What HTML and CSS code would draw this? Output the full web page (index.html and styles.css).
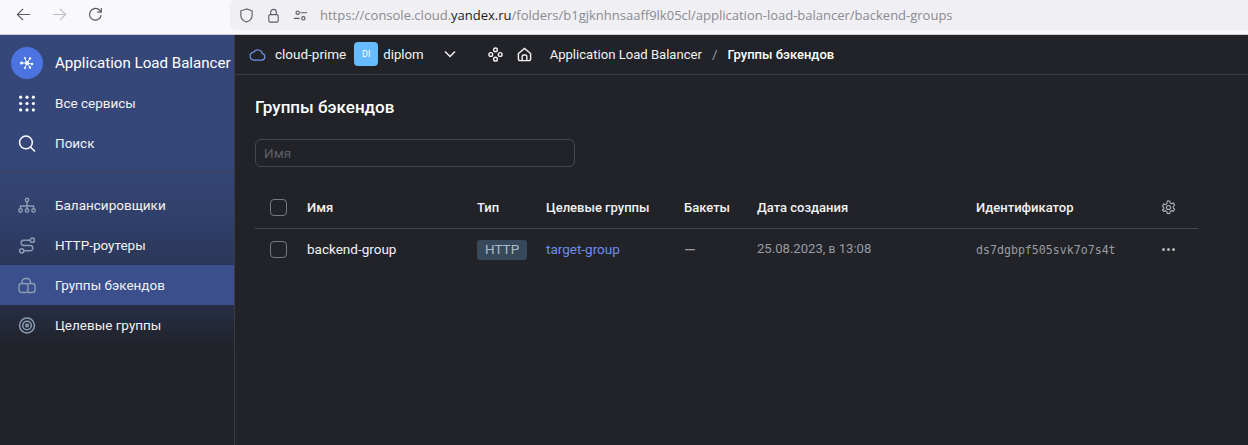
FILE: index.html
```html
<!DOCTYPE html>
<html lang="ru">
<head>
    <meta charset="UTF-8">
    <title>Группы бэкендов</title>
    <link rel="stylesheet" href="styles.css">
</head>
<body>
    <div class="browser-bar">
        <div class="nav-buttons">
            <svg class="nav-icon" viewBox="0 0 16 16"><path d="M15 8H1.500M7.500 2 1.500 8l6 6"/></svg>
            <svg class="nav-icon nav-off" viewBox="0 0 16 16"><path d="M1 8h13.500M8.500 2l6 6-6 6"/></svg>
            <svg class="nav-icon" viewBox="0 0 16 16"><path d="M14 8.600A6.200 6.200 0 1 1 11.800 3l2.200 2.200"/><path d="M14.200 1v4.400H9.800"/></svg>
        </div>
        <div class="url-pill">
            <svg class="url-icon" viewBox="0 0 16 16"><path d="M8 1 2 3v5c0 3.400 2.600 5.800 6 7 3.400-1.200 6-3.600 6-7V3z"/></svg>
            <svg class="url-icon" viewBox="0 0 16 16"><rect x="3" y="7" width="10" height="8" rx="1.500"/><path d="M5 7V4.500a3 3 0 0 1 6 0V7"/></svg>
            <svg class="url-icon" viewBox="0 0 16 16"><path d="M8 5h7M1 11h6"/><circle cx="5" cy="5" r="1.800"/><circle cx="11" cy="11" r="1.800"/></svg>
            <span class="url-text">https://console.cloud.<b>yandex.ru</b>/folders/b1gjknhnsaaff9lk05cl/application-load-balancer/backend-groups</span>
        </div>
    </div>

    <div class="app">
        <aside class="sidebar">
            <div class="brand">
                <span class="brand-logo">
                    <svg viewBox="0 0 16 16"><path d="M8 8 3 8M8 8l3-4.500M8 8l4.500 1M8 8l-2-4.500M8 8l-2 4.500M8 8l3 4.500"/><circle cx="8" cy="8" r="2" class="dot"/><circle cx="2.500" cy="8" r="1.500" class="dot"/><circle cx="11" cy="3.500" r="1.200" class="dot"/><circle cx="13" cy="9" r="1.200" class="dot"/><circle cx="6" cy="3" r="1" class="dot"/><circle cx="6" cy="13" r="1" class="dot"/><circle cx="11" cy="12.500" r="1.200" class="dot"/></svg>
                </span>
                <span class="brand-name">Application Load Balancer</span>
            </div>
            <a class="side-item white">
                <svg viewBox="0 0 16 16"><g class="dot"><circle cx="2" cy="2" r="1.500"/><circle cx="8" cy="2" r="1.500"/><circle cx="14" cy="2" r="1.500"/><circle cx="2" cy="8" r="1.500"/><circle cx="8" cy="8" r="1.500"/><circle cx="14" cy="8" r="1.500"/><circle cx="2" cy="14" r="1.500"/><circle cx="8" cy="14" r="1.500"/><circle cx="14" cy="14" r="1.500"/></g></svg>
                <span>Все сервисы</span>
            </a>
            <a class="side-item white">
                <svg viewBox="0 0 16 16"><circle cx="7" cy="7" r="6"/><path d="m11.500 11.500 4 4"/></svg>
                <span>Поиск</span>
            </a>
            <div class="side-divider"></div>
            <a class="side-item">
                <svg viewBox="0 0 18 16"><circle cx="9" cy="2.500" r="1.700"/><circle cx="2.500" cy="13" r="1.700"/><circle cx="9" cy="13" r="1.700"/><circle cx="15.500" cy="13" r="1.700"/><path d="M9 4.500v6.500M2.500 11V8.500h13V11"/></svg>
                <span>Балансировщики</span>
            </a>
            <a class="side-item">
                <svg viewBox="0 0 16 16"><circle cx="13" cy="3" r="2"/><circle cx="3" cy="13" r="2"/><path d="M11 3H5a2.500 2.500 0 0 0 0 5h6a2.500 2.500 0 0 1 0 5H5"/></svg>
                <span>HTTP-роутеры</span>
            </a>
            <a class="side-item active">
                <svg viewBox="0 0 18 16"><rect x="1" y="6" width="9" height="9" rx="2.500"/><path d="M4 6V4.500A3.500 3.500 0 0 1 7.500 1h1.500a3.500 3.500 0 0 1 3.500 3.500V6"/><path d="M10 6h4.500A2.500 2.500 0 0 1 17 8.500v4a2.500 2.500 0 0 1-2.500 2.500H10"/></svg>
                <span>Группы бэкендов</span>
            </a>
            <a class="side-item">
                <svg viewBox="0 0 16 16"><circle cx="8" cy="8" r="7"/><circle cx="8" cy="8" r="4"/><circle cx="8" cy="8" r="1.200"/></svg>
                <span>Целевые группы</span>
            </a>
        </aside>

        <main class="content">
            <header class="topbar">
                <svg class="cloud-icon" viewBox="0 0 18 14"><path d="M4.500 13h9a3.500 3.500 0 0 0 .7-6.900A5 5 0 0 0 5 4.500 4.300 4.300 0 0 0 4.500 13z"/></svg>
                <span class="crumb cloud-name">cloud-prime</span>
                <span class="folder-badge">DI</span>
                <span class="crumb folder-name">diplom</span>
                <svg class="chevron" viewBox="0 0 12 8"><path d="m1 1.500 5 5 5-5"/></svg>
                <svg class="top-icon" viewBox="0 0 16 16"><circle cx="8" cy="3" r="2"/><circle cx="3" cy="8" r="2"/><circle cx="13" cy="8" r="2"/><circle cx="8" cy="13" r="2"/></svg>
                <svg class="top-icon home" viewBox="0 0 16 16"><path d="M1.500 7 8 1.500 14.500 7v5.500a2 2 0 0 1-2 2h-9a2 2 0 0 1-2-2z"/><path d="M5.500 14.500V10a1.500 1.500 0 0 1 1.500-1.500h2A1.500 1.500 0 0 1 10.500 10v4.500"/></svg>
                <span class="crumb service">Application Load Balancer</span>
                <span class="slash">/</span>
                <span class="crumb current">Группы бэкендов</span>
            </header>

            <div class="page">
                <h1>Группы бэкендов</h1>
                <input class="filter" type="text" placeholder="Имя">
                <div class="table">
                    <div class="row head">
                        <span class="check"></span>
                        <span>Имя</span>
                        <span>Тип</span>
                        <span>Целевые группы</span>
                        <span>Бакеты</span>
                        <span>Дата создания</span>
                        <span>Идентификатор</span>
                        <svg class="gear" viewBox="0 0 16 16"><path d="M6.700 1h2.600l.4 2 1.500.9 2-.7 1.300 2.300-1.500 1.300v1.700l1.500 1.300-1.300 2.300-2-.7-1.500.9-.4 2H6.700l-.4-2-1.500-.9-2 .7L1.500 10.800 3 9.500V7.800L1.500 6.500l1.300-2.300 2 .7 1.500-.9z"/><circle cx="8" cy="8" r="2.200"/></svg>
                    </div>
                    <div class="row body">
                        <span class="check"></span>
                        <span class="name">backend-group</span>
                        <span><span class="tag">HTTP</span></span>
                        <span class="link">target-group</span>
                        <span class="dash">—</span>
                        <span class="muted">25.08.2023, <small>в</small> 13:08</span>
                        <span class="mono">ds7dgbpf505svk7o7s4t</span>
                        <span class="dots"><i></i><i></i><i></i></span>
                    </div>
                </div>
            </div>
        </main>
    </div>
</body>
</html>
```

FILE: styles.css
```css
* {
    box-sizing: border-box;
}
html, body {
    height: 100%;
}
body {
    margin: 0;
    display: flex;
    flex-direction: column;
    overflow: hidden;
    background: #212329;
    font-family: Roboto, "Noto Sans", sans-serif;
    font-size: 13.5px;
    color: #f2f2f3;
}
svg {
    fill: none;
    stroke: currentColor;
    flex-shrink: 0;
}
.dot, .dot circle {
    fill: currentColor;
    stroke: none;
}

/* browser chrome */
.browser-bar {
    flex: 0 0 35px;
    display: flex;
    background: #f9f9fb;
    border-bottom: 1px solid #cfcfd3;
}
.nav-buttons {
    width: 230px;
    display: flex;
    align-items: center;
    gap: 21px;
    padding: 0 0 5px 16px;
}
.nav-icon {
    width: 15px;
    height: 15px;
    stroke: #5b5b66;
    stroke-width: 1.300;
}
.nav-off {
    stroke: #bdbdc4;
}
.url-pill {
    flex: 1;
    height: 30px;
    display: flex;
    align-items: center;
    background: #f0f0f4;
    border-radius: 6px 0 0 6px;
    padding-left: 9px;
    gap: 12px;
}
.url-icon {
    width: 15px;
    height: 15px;
    stroke: #5b5b66;
    stroke-width: 1.200;
}
.url-text {
    font-family: "Open Sans", sans-serif;
    font-size: 13px;
    color: #8a8a92;
    white-space: nowrap;
}
.url-text b {
    font-weight: 400;
    color: #1c1b22;
}

.app {
    flex: 1;
    display: flex;
    min-height: 0;
}

/* sidebar */
.sidebar {
    width: 235px;
    border-right: 1px solid #3a3c42;
    background: linear-gradient(180deg, #354779 0, #354779 120px, #2f3f69 190px, #262c40 280px, #212329 310px);
}
.brand {
    height: 48px;
    display: flex;
    align-items: flex-start;
    padding: 12px 0 0 11px;
}
.brand-logo {
    width: 32px;
    height: 32px;
    border-radius: 50%;
    background: #4b74e0;
    display: flex;
    align-items: center;
    justify-content: center;
    color: #fff;
}
.brand-logo svg {
    width: 16px;
    height: 16px;
    stroke-width: 1;
}
.brand-name {
    margin-left: 12px;
    font-size: 15.100px;
    line-height: 32px;
    color: #fff;
    white-space: nowrap;
}
.side-item {
    height: 40px;
    display: flex;
    align-items: center;
    padding-left: 18px;
    color: #f2f2f3;
}
.side-item svg {
    width: 18px;
    height: 17px;
    stroke: #8a9db5;
    stroke-width: 1.400;
}
.side-item.white svg {
    stroke: #fff;
    color: #fff;
}
.side-item.white svg .dot {
    stroke: none;
}
.side-item span {
    margin-left: 19px;
}
.side-item.active {
    background: #3a4f8b;
}
.side-divider {
    margin: 9px 0 12px;
    height: 1px;
    background: #3f4248;
}

/* header */
.content {
    flex: 1;
    min-width: 0;
}
.topbar {
    height: 40px;
    display: flex;
    align-items: center;
    padding: 0 0 1px 14px;
    border-bottom: 1px solid #3a3c42;
}
.cloud-icon {
    width: 17px;
    height: 13px;
    stroke: #6f93e8;
    stroke-width: 1.300;
}
.crumb {
    white-space: nowrap;
}
.cloud-name {
    margin-left: 9px;
}
.folder-badge {
    width: 24px;
    height: 24px;
    margin-left: 8px;
    border-radius: 4px;
    background: #66bcff;
    color: #fff;
    font-size: 9px;
    display: flex;
    align-items: center;
    justify-content: center;
}
.folder-name {
    margin-left: 5px;
    font-size: 13.200px;
}
.chevron {
    width: 12px;
    height: 8px;
    margin-left: 20px;
    stroke: #f2f2f3;
    stroke-width: 1.500;
}
.top-icon {
    width: 15px;
    height: 15px;
    margin-left: 32px;
    stroke: #f2f2f3;
    stroke-width: 1.500;
}
.top-icon.home {
    margin-left: 14px;
}
.service {
    margin-left: 18px;
    font-size: 13.100px;
}
.slash {
    margin: 0 10px;
    color: #9a9ba0;
}
.current {
    font-size: 13px;
    font-weight: 500;
    color: #fff;
}

/* page */
.page {
    padding: 0 50px 0 20px;
}
h1 {
    margin: 0;
    padding-top: 21px;
    font-size: 17px;
    line-height: 22px;
    font-weight: 500;
    color: #fff;
}
.filter {
    display: block;
    width: 320px;
    height: 28px;
    margin-top: 21px;
    padding: 0 8px;
    background: transparent;
    border: 1px solid #46484e;
    border-radius: 6px;
    font: inherit;
    color: #f2f2f3;
}
.filter::placeholder {
    color: #5e6066;
}
.table {
    margin-top: 19px;
}
.row {
    display: grid;
    grid-template-columns: 37px 170px 69px 138px 73px 219px 185px 1fr;
    align-items: center;
    padding-left: 15px;
}
.row.head {
    height: 43px;
    font-size: 13px;
    font-weight: 500;
    border-bottom: 1px solid #46484e;
}
.row.body {
    height: 41px;
}
.check {
    width: 17px;
    height: 17px;
    border: 1px solid #77797e;
    border-radius: 4px;
}
.name, .link, .muted {
    padding-bottom: 2px;
}
.name {
    color: #f2f2f3;
}
.tag {
    display: inline-block;
    height: 20px;
    padding: 0 8px;
    line-height: 19px;
    border-radius: 3px;
    background: #36485a;
    color: #a9bccd;
}
.link {
    color: #6b8ef0;
}
.muted {
    font-size: 13.100px;
    color: #9a9ba0;
}
.muted small {
    font-size: 12px;
}
.dash {
    font-size: 15px;
    color: #9a9ba0;
}
.mono {
    font-family: "DejaVu Sans Mono", monospace;
    font-size: 11.600px;
    color: #9a9ba0;
}
.gear {
    width: 15px;
    height: 15px;
    stroke: #b5b6ba;
    stroke-width: 1.100;
}
.dots {
    display: flex;
    gap: 2px;
    margin-left: 1px;
}
.dots i {
    width: 3px;
    height: 3px;
    border-radius: 50%;
    background: #b5b6ba;
}
```
